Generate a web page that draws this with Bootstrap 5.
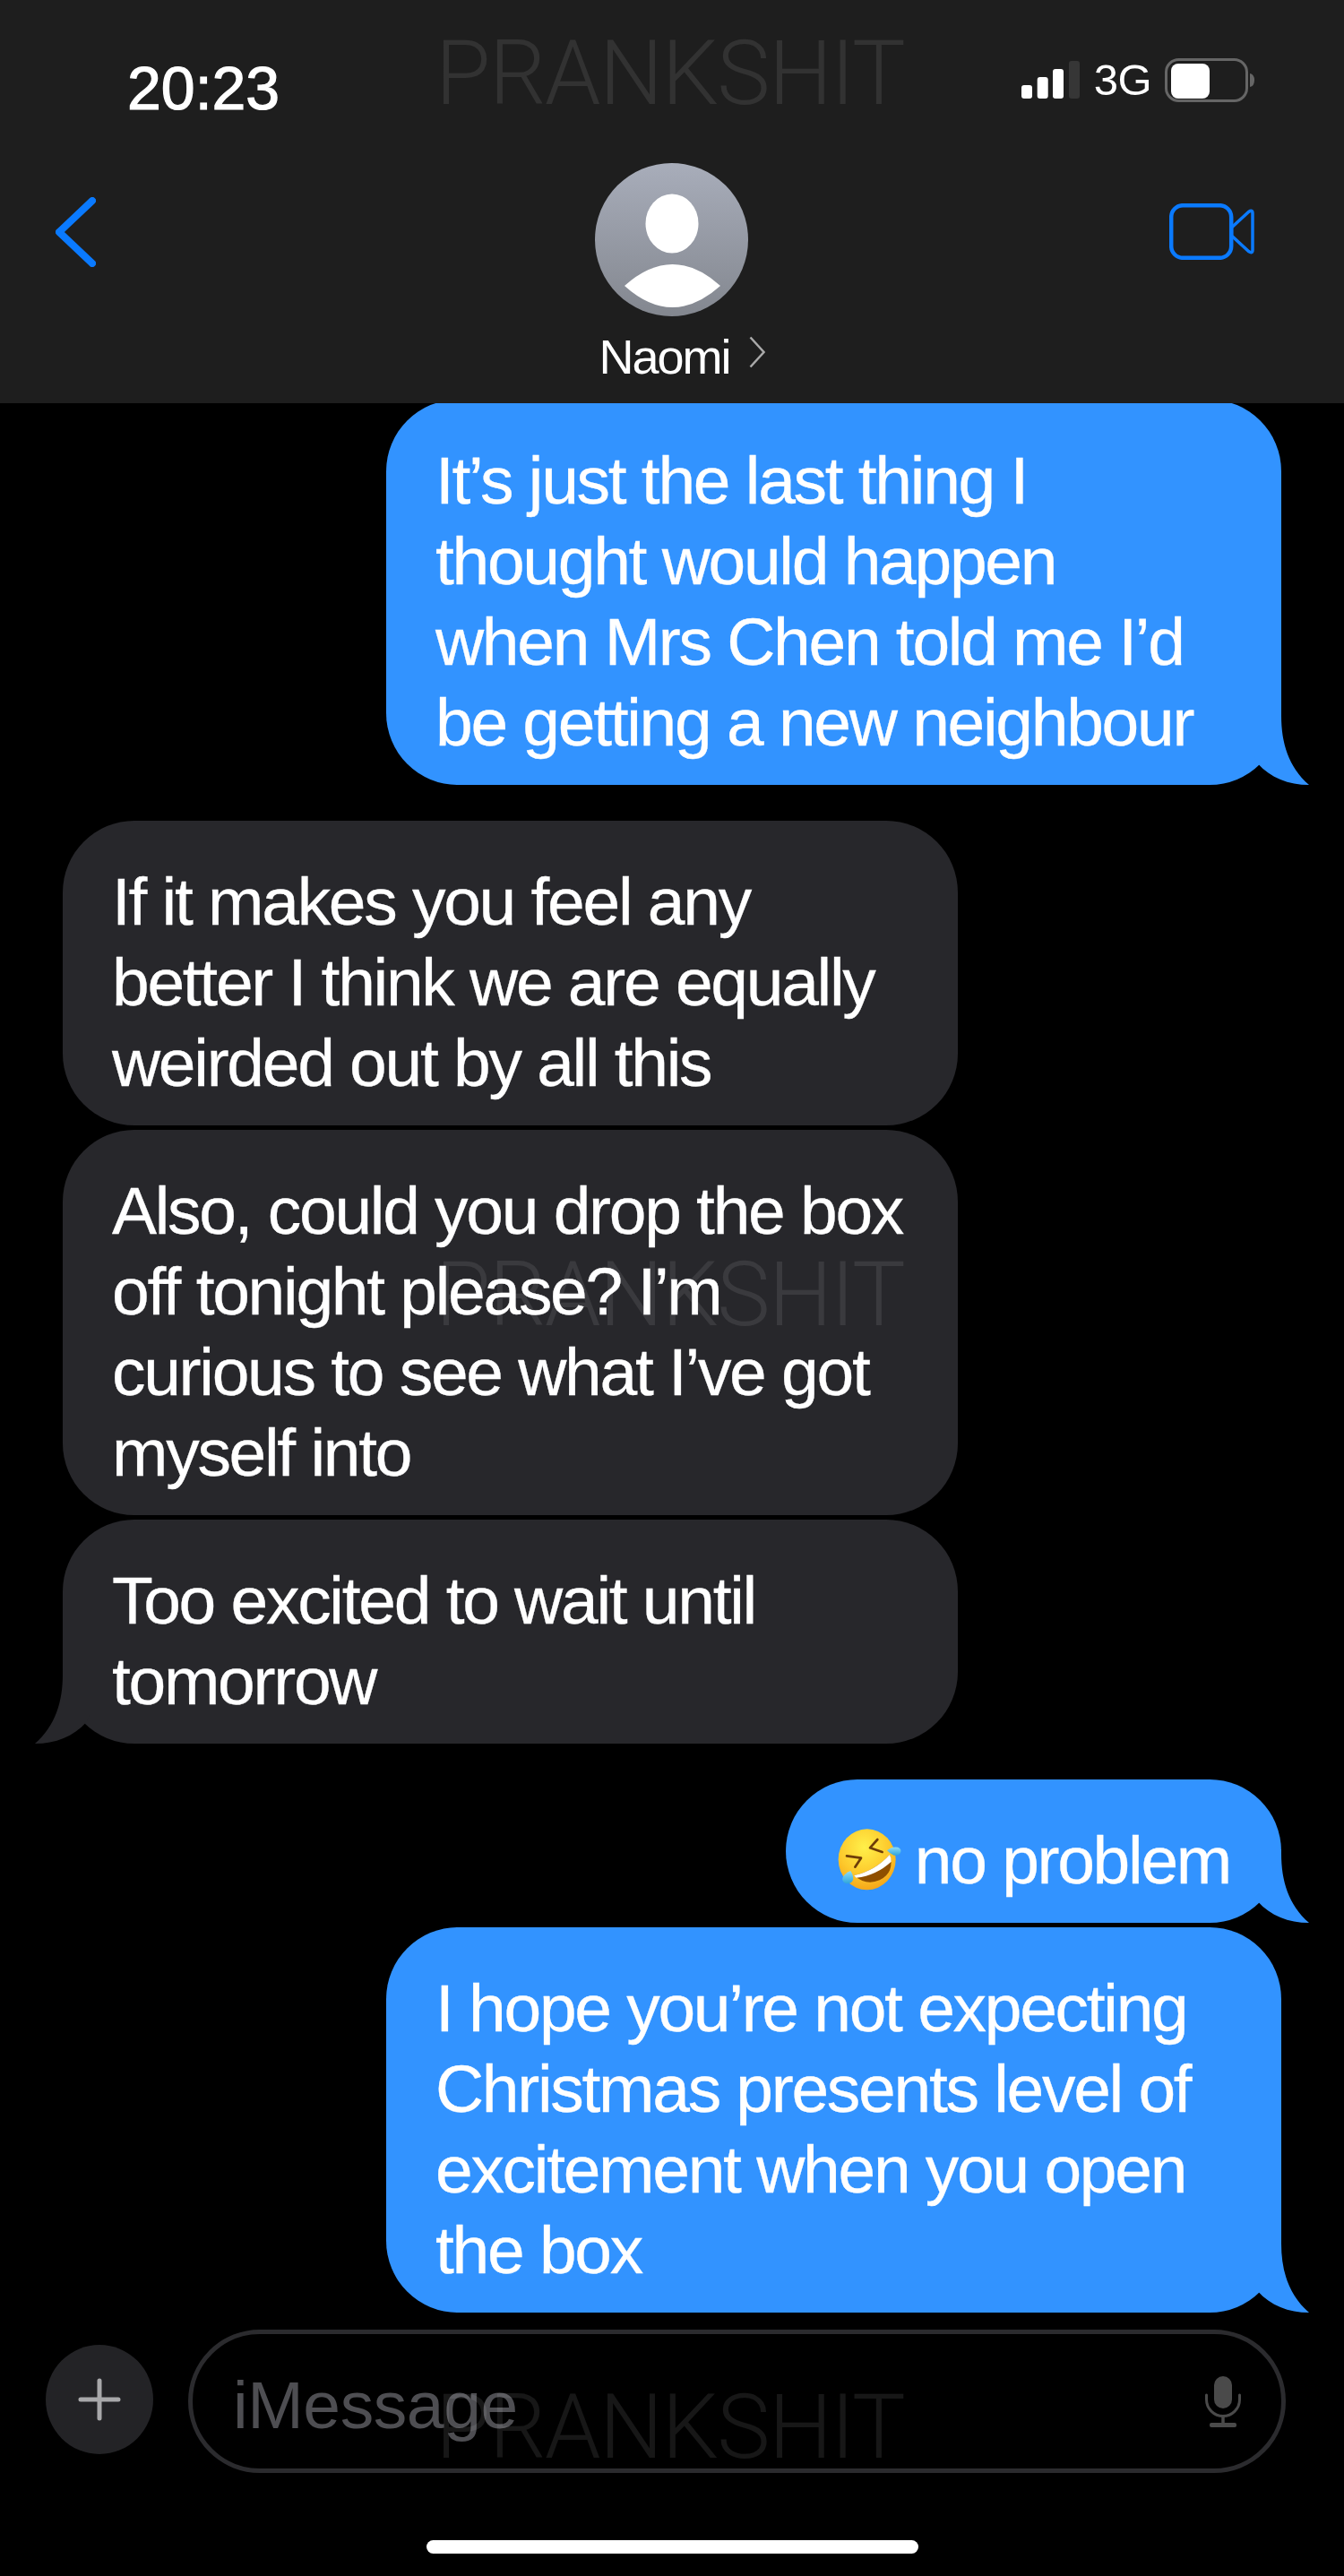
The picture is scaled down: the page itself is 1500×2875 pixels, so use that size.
<!DOCTYPE html>
<html lang="en">
<head>
  <meta charset="UTF-8">
  <title>Naomi</title>
  <meta name="viewport" content="width=device-width, initial-scale=1">
  <link href="https://cdn.jsdelivr.net/npm/bootstrap@5.3.3/dist/css/bootstrap.min.css" rel="stylesheet">
  <style>
    body { background: #000; font-family: "Liberation Sans", Arial, sans-serif; color: #fff; }
    .phone { width: 1500px; height: 2875px; overflow: hidden; }

    /* header */
    .top-bar { position: relative; z-index: 1; height: 450px; background: #1e1e1e; flex: none; }
    .status-row { height: 182px; padding: 64px 100px 0 142px; }
    .clock { font-size: 68px; line-height: 68px; -webkit-text-stroke: 1.2px #fff; }
    .net-label { font-size: 49px; line-height: 50px; letter-spacing: -.5px; margin: 0 15px 0 16px; }
    .contact-row { display: grid; grid-template-columns: 1fr 171px 1fr; padding: 0 64px 0 62px; }
    .back-icon { margin-top: 38px; }
    .video-icon { margin-top: 45px; margin-right: 36px; }
    .contact-name { width: 300px; margin-left: -65px; margin-top: 15px; font-size: 54px; line-height: 60px; letter-spacing: -2px; padding-left: 70px; }
    .name-chevron { margin-left: 21px; margin-top: 7px; }

    /* messages */
    .thread { flex: 1 1 auto; min-height: 0; padding: 0 70px; overflow: visible; }
    .bubble { position: relative; padding: 45px 55px 25px; font-size: 75px; line-height: 90px; letter-spacing: -2.3px; -webkit-text-stroke: .3px #fff; border-radius: 80px; white-space: nowrap; width: 999px; }
    .bubble-out { background: #3293ff; align-self: flex-end; }
    .bubble-in { background: #27272b; align-self: flex-start; }
    .bubble-auto { width: auto; padding-left: 58px; padding-right: 57px; }
    .bubble-first { margin-top: -4px; }
    .after-gap { margin-top: 40px; }
    .next-gap { margin-top: 5px; }
    .tail { position: absolute; bottom: 0; }
    .tail-out { right: -31px; fill: #3293ff; }
    .tail-in { left: -31px; fill: #27272b; transform: scaleX(-1); }
    .emoji-icon { vertical-align: top; margin-top: 10px; margin-right: 14px; }

    /* composer */
    .composer { flex: none; height: 160px; margin-bottom: 75px; padding: 0 65px 0 51px; gap: 39px; }
    .plus-btn { width: 120px; height: 122px; border-radius: 50%; background: #232326; flex: none; margin-top: -4px; }
    .msg-field { height: 160px; border: 5px solid #2b2b2e; border-radius: 80px; padding: 0 45px 0 45px; }
    .msg-hint { font-size: 75px; line-height: 80px; letter-spacing: -.4px; color: #4e4e52; margin-top: 7px; }
    .home-strip { width: 549px; height: 15px; border-radius: 8px; background: #fff; flex: none; margin: 0 auto 25px; }

    /* PRANKSHIT overlay */
    .stamp { position: absolute; z-index: 2; left: 486px; font-family: Roboto, "Liberation Sans", sans-serif; font-weight: 300; font-size: 100px; line-height: 100px; letter-spacing: -1.5px; color: rgba(255, 255, 255, .09); pointer-events: none; }
    .stamp-top { top: 32px; }
    .stamp-mid { top: 1395px; }
    .stamp-low { top: 2659px; }
  </style>
</head>
<body>

<div class="phone position-relative d-flex flex-column">

  <!-- Header -->
  <div class="top-bar">
    <div class="status-row d-flex justify-content-between align-items-start">
      <div class="clock">20:23</div>
      <div class="d-flex align-items-center">
        <svg width="65" height="42" viewBox="0 0 65 42">
          <rect x="0" y="27" width="12" height="15" rx="3" fill="#fff"/>
          <rect x="17.7" y="18" width="12" height="24" rx="3" fill="#fff"/>
          <rect x="35" y="9" width="12" height="33" rx="3" fill="#fff"/>
          <rect x="53" y="0" width="12" height="42" rx="3" fill="#363636"/>
        </svg>
        <span class="net-label">3G</span>
        <svg width="100" height="49" viewBox="0 0 100 49">
          <rect x="1.5" y="1.5" width="90" height="46" rx="14" fill="none" stroke="#666" stroke-width="3"/>
          <rect x="7" y="6" width="43" height="39" rx="8" fill="#fff"/>
          <path d="M95 17 q5 1 5 7.500 t-5 7.500z" fill="#666"/>
        </svg>
      </div>
    </div>
    <div class="contact-row">
      <div>
        <svg class="back-icon" width="45" height="78" viewBox="0 0 45 78">
          <path d="M41 4 L4 39 L41 74" fill="none" stroke="#0a7aff" stroke-width="8" stroke-linecap="round" stroke-linejoin="round"/>
        </svg>
      </div>
      <div>
        <svg class="d-block" width="171" height="171" viewBox="0 0 171 171">
          <defs>
            <linearGradient id="avatarFill" x1="0" y1="0" x2="0" y2="1">
              <stop offset="0" stop-color="#a8adba"/>
              <stop offset="1" stop-color="#83878f"/>
            </linearGradient>
          </defs>
          <circle cx="85.500" cy="85.500" r="85.500" fill="url(#avatarFill)"/>
          <ellipse cx="86" cy="67.500" rx="29.500" ry="33" fill="#fff"/>
          <path d="M33 137 Q86.500 89 140 137 Q86.500 185 33 137z" fill="#fff"/>
        </svg>
        <div class="contact-name d-flex align-items-start">Naomi
          <svg class="name-chevron" width="18" height="36" viewBox="0 0 18 36">
            <path d="M1.500 1.500 L16.500 18 L1.500 34.500" fill="none" stroke="#a9a9a9" stroke-width="2.500"/>
          </svg>
        </div>
      </div>
      <div class="text-end">
        <svg class="video-icon" width="95" height="63" viewBox="0 0 95 63">
          <rect x="2.200" y="2.200" width="67" height="58.600" rx="13" fill="none" stroke="#0a7aff" stroke-width="4.500"/>
          <path d="M69.500 27 L88.500 9.500 Q93 6.500 93 11 V52 Q93 56.500 88.500 53.500 L69.500 36z" fill="none" stroke="#0a7aff" stroke-width="3.500" stroke-linejoin="round"/>
        </svg>
      </div>
    </div>
  </div>

  <!-- Messages -->
  <div class="thread d-flex flex-column">
    <div class="bubble bubble-out bubble-first">It’s just the last thing I<br>thought would happen<br>when Mrs Chen told me I’d<br>be getting a new neighbour
      <svg class="tail tail-out" width="61" height="82" viewBox="0 0 61 82"><path d="M30 0 V5 C30 35 38 62 61 82 C38 82 18 74 3.600 58 L0 50 V0z"/></svg>
    </div>

    <div class="bubble bubble-in after-gap">If it makes you feel any<br>better I think we are equally<br>weirded out by all this</div>
    <div class="bubble bubble-in next-gap">Also, could you drop the box<br>off tonight please? I’m<br>curious to see what I’ve got<br>myself into</div>
    <div class="bubble bubble-in next-gap">Too excited to wait until<br>tomorrow
      <svg class="tail tail-in" width="61" height="82" viewBox="0 0 61 82"><path d="M30 0 V5 C30 35 38 62 61 82 C38 82 18 74 3.600 58 L0 50 V0z"/></svg>
    </div>

    <div class="bubble bubble-out bubble-auto after-gap">
      <svg class="emoji-icon" width="72" height="70" viewBox="30 24 216 210">
        <defs>
          <radialGradient id="faceFill" cx=".45" cy=".3" r=".8">
            <stop offset="0" stop-color="#fff04a"/>
            <stop offset=".55" stop-color="#fdc92c"/>
            <stop offset="1" stop-color="#f39a12"/>
          </radialGradient>
          <linearGradient id="tearFill" x1="0" y1="0" x2="0" y2="1">
            <stop offset="0" stop-color="#8fdcf7"/>
            <stop offset="1" stop-color="#2fa5dc"/>
          </linearGradient>
        </defs>
        <ellipse cx="128" cy="127" rx="96" ry="102" fill="url(#faceFill)"/>
        <path d="M163 60 L138 88 L179 102" fill="none" stroke="#6e3d08" stroke-width="8" stroke-linejoin="round" stroke-linecap="round"/>
        <path d="M60 115 L108 122 L88 152" fill="none" stroke="#6e3d08" stroke-width="8" stroke-linejoin="round" stroke-linecap="round"/>
        <path d="M84 180 Q155 165 204 110 Q222 170 170 196 Q125 216 84 180z" fill="#8f4f00"/>
        <path d="M84 180 Q155 165 204 110 Q209 122 209 134 Q160 180 92 188z" fill="#fff"/>
        <path d="M195 97 Q210 82 232 86 Q245 92 240 104 Q232 116 218 113 Q205 108 195 97z" fill="url(#tearFill)"/>
        <path d="M73 165 Q86 185 80 198 Q70 212 54 206 Q42 198 47 186 Q55 172 73 165z" fill="url(#tearFill)"/>
      </svg>no problem
      <svg class="tail tail-out" width="61" height="82" viewBox="0 0 61 82"><path d="M30 0 V5 C30 35 38 62 61 82 C38 82 18 74 3.600 58 L0 50 V0z"/></svg>
    </div>
    <div class="bubble bubble-out next-gap">I hope you’re not expecting<br>Christmas presents level of<br>excitement when you open<br>the box
      <svg class="tail tail-out" width="61" height="82" viewBox="0 0 61 82"><path d="M30 0 V5 C30 35 38 62 61 82 C38 82 18 74 3.600 58 L0 50 V0z"/></svg>
    </div>
  </div>

  <!-- Composer -->
  <div class="composer d-flex align-items-center">
    <div class="plus-btn d-flex align-items-center justify-content-center">
      <svg width="48" height="48" viewBox="0 0 48 48">
        <path d="M24 3 V45 M3 24 H45" fill="none" stroke="#a8a8aa" stroke-width="5" stroke-linecap="round"/>
      </svg>
    </div>
    <div class="msg-field flex-grow-1 d-flex align-items-center justify-content-between">
      <span class="msg-hint">iMessage</span>
      <svg width="40" height="57" viewBox="0 0 40 57">
        <rect x="10" y="0" width="20" height="36" rx="10" fill="#4a4a4a"/>
        <path d="M1.500 21 V26 a18.500 18.500 0 0 0 37 0 V21" fill="none" stroke="#4a4a4a" stroke-width="3" stroke-linecap="round"/>
        <path d="M20 44 V53" stroke="#4a4a4a" stroke-width="3.500"/>
        <rect x="5" y="52" width="30" height="5" rx="2" fill="#4a4a4a"/>
      </svg>
    </div>
  </div>

  <div class="home-strip"></div>

  <div class="stamp stamp-top">PRANKSHIT</div>
  <div class="stamp stamp-mid">PRANKSHIT</div>
  <div class="stamp stamp-low">PRANKSHIT</div>
</div>

<script src="https://cdn.jsdelivr.net/npm/bootstrap@5.3.3/dist/js/bootstrap.bundle.min.js"></script>
</body>
</html>
